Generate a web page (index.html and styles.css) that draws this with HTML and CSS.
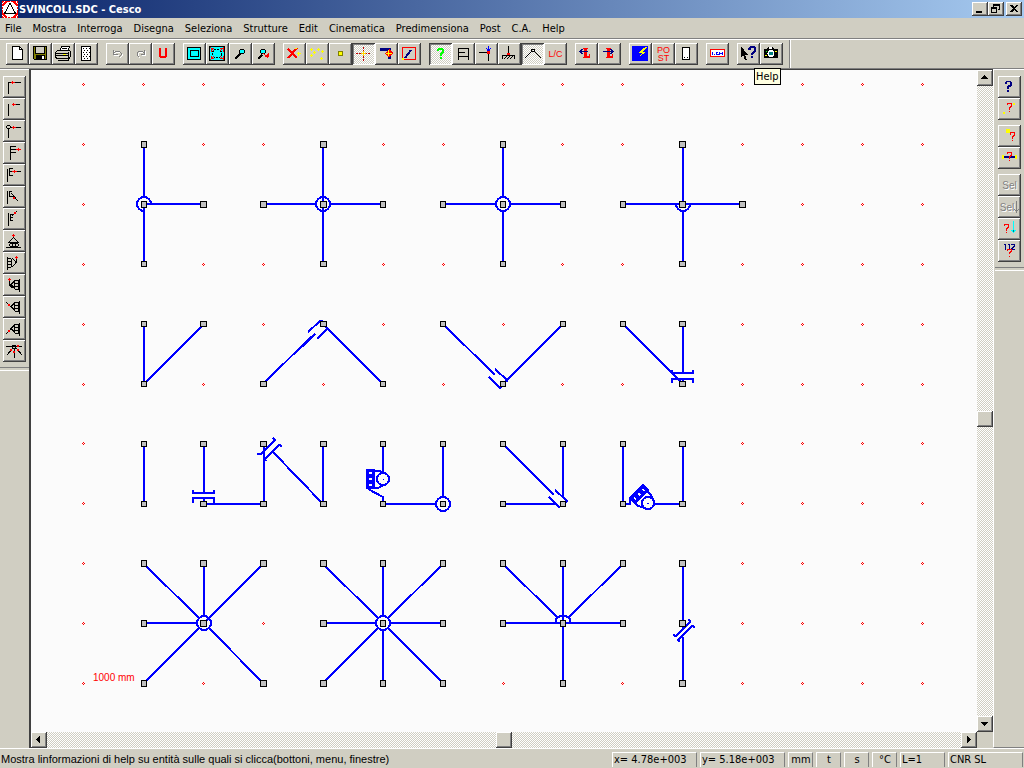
FILE: index.html
```html
<!DOCTYPE html>
<html lang="it">
<head>
    <meta charset="UTF-8">
    <meta name="viewport" content="width=device-width, initial-scale=1.0">
    <title>SVINCOLI.SDC - Cesco</title>
    <link rel="stylesheet" href="styles.css">
</head>
<body>
    <header class="title-bar">
        <svg class="logo" viewBox="0 0 16 17">
            <path d="M0 0h16v17H0z" fill="#fff"/>
            <path d="M0 .5h16M0 16.5h16" stroke="#f00" stroke-dasharray="2 1"/>
            <path d="M.5 0v17M15.5 0v17" stroke="#f00" stroke-dasharray="2 1"/>
            <path d="M0 5l5-5M16 5l-5-5M0 12l5 5M16 12l-5 5" stroke="#f00" stroke-width="2"/>
            <path d="M8 2.500L2.500 12.500h11z" fill="#fff" stroke="#000"/>
        </svg>
        <h1>SVINCOLI.SDC - Cesco</h1>
        <div class="window-controls">
            <button class="win-btn" aria-label="Minimize"><svg viewBox="0 0 16 14"><path d="M4 9h6v2H4z"/></svg></button>
            <button class="win-btn" aria-label="Restore"><svg viewBox="0 0 16 14"><path d="M5 2h7v6h-2V7h1V4H6v1H5zM3 5h6v6H3zm1 2v3h4V7z" fill-rule="evenodd"/></svg></button>
            <button class="win-btn close" aria-label="Close"><svg viewBox="0 0 16 14"><path d="M4 3h2l2 2 2-2h2L9 6.500l3 3.500h-2L8 8l-2 2H4l3-3.500z"/></svg></button>
        </div>
    </header>

    <nav class="menu-bar">
        <a href="#">File</a>
        <a href="#">Mostra</a>
        <a href="#">Interroga</a>
        <a href="#">Disegna</a>
        <a href="#">Seleziona</a>
        <a href="#">Strutture</a>
        <a href="#">Edit</a>
        <a href="#">Cinematica</a>
        <a href="#">Predimensiona</a>
        <a href="#">Post</a>
        <a href="#">C.A.</a>
        <a href="#">Help</a>
    </nav>

    <div class="toolbar">
        <div class="group">
            <button class="tool" aria-label="Nuovo"><svg viewBox="0 0 23 22"><path d="M6.500 3.500h7l3 3v10h-10z" fill="#fff" stroke="#000"/><path d="M13.500 3.500v3h3" fill="none" stroke="#000"/></svg></button>
            <button class="tool" aria-label="Salva"><svg viewBox="0 0 23 22"><path d="M4.500 3.500h13v13h-12l-1-1z" fill="#808000" stroke="#000"/><path d="M7 4h8v6H7z" fill="#d0cec2"/><path d="M6.500 4v6.500h9V4" fill="none" stroke="#000"/><path d="M7 12h9v5H7z"/><path d="M13 13h2v3h-2z" fill="#fff"/></svg></button>
            <button class="tool" aria-label="Stampa"><svg viewBox="0 0 23 22"><path d="M7.500 8.500l2-5h8l-2 5z" fill="#fff" stroke="#000"/><path d="M10 5.500h5M9 7.500h5" stroke="#000"/><path d="M3.500 9.500l2-2h12l1 1v5l-2 2H5l-1.500-1.500z" fill="#d0cec2" stroke="#000"/><path d="M4 10.500h12M4 12.500h12M16.500 9v6M6 17.500h10l2-3" stroke="#000" fill="none"/><path d="M11 11h3v1h-3z" fill="#ff0"/></svg></button>
            <button class="tool" aria-label="Retino"><svg viewBox="0 0 23 22"><path d="M6.500 3.500h9v14h-9z" fill="#fff" stroke="#000"/><path d="M8 5.500h7M8 9.500h7M8 13.500h7" stroke="#000" stroke-dasharray="1 2"/><path d="M9 7.500h6M9 11.500h6M9 15.500h6" stroke="#000" stroke-dasharray="1 2"/></svg></button>
        </div>
        <div class="group">
            <button class="tool" aria-label="Annulla" disabled><svg viewBox="0 0 23 22"><path d="M8.500 8v4h4M9 11l2-2h3l2 2v2l-2 2" fill="none" stroke="#fff"/><path d="M7.500 7v4h4M8 10l2-2h3l2 2v2l-2 2" fill="none" stroke="#808080"/></svg></button>
            <button class="tool" aria-label="Ripeti" disabled><svg viewBox="0 0 23 22"><path d="M16.500 8v4h-4M16 11l-2-2h-3l-2 2v2l2 2" fill="none" stroke="#fff"/><path d="M15.500 7v4h-4M15 10l-2-2h-3l-2 2v2l2 2" fill="none" stroke="#808080"/></svg></button>
            <button class="tool" aria-label="Undo"><svg viewBox="0 0 23 22"><path d="M7 5h2v8h4V5h2v9h-1v1H8v-1H7z" fill="#f00"/></svg></button>
        </div>
        <div class="group">
            <button class="tool" aria-label="Finestra"><svg viewBox="0 0 23 22"><path d="M4.500 4.500h13v12h-13z" fill="#0ff" stroke="#000"/><path d="M7.500 7.500h8v6h-8z" fill="#0ff" stroke="#000"/></svg></button>
            <button class="tool" aria-label="Zoom tutto"><svg viewBox="0 0 23 22"><path d="M3.500 3.500h15v14h-15z" fill="#0ff" stroke="#000"/><circle cx="11" cy="10.500" r="4.500" fill="#0ff" stroke="#000" stroke-dasharray="2 1"/><path d="M4 4l4 4M18 4l-4 4M4 17l4-4M18 17l-4-4M5 8.500V5.500h3M17 8.500V5.500h-3M5 12.500v3h3M17 12.500v3h-3" fill="none" stroke="#f00"/></svg></button>
            <button class="tool" aria-label="Zoom"><svg viewBox="0 0 23 22"><path d="M6 16l5-5" stroke="#000" stroke-width="2"/><circle cx="13" cy="8.500" r="2.500" fill="#0ff" stroke="#000"/></svg></button>
            <button class="tool" aria-label="Zoom meno"><svg viewBox="0 0 23 22"><path d="M6 16l4-4" stroke="#000" stroke-width="2"/><circle cx="11" cy="8.500" r="2.500" fill="#0ff" stroke="#000"/><path d="M11 10l5 5" stroke="#f00"/><path d="M12 14h5V9z" fill="#f00"/></svg></button>
        </div>
        <div class="group">
            <button class="tool" aria-label="Cancella"><svg viewBox="0 0 23 22"><path d="M5 6l9 9M14 5L5 15" stroke="#f00" stroke-width="2"/><path d="M14 10.500h4M15.500 9v4M12 5.500h2" stroke="#ff0"/></svg></button>
            <button class="tool" aria-label="Punti"><svg viewBox="0 0 23 22"><path d="M4 6.500h3M5.500 5v3M11 6.500h3M12.500 5v3M15 8.500h3M16.500 7v3M7 9.500h3M8.500 8v3M4 12.500h3M5.500 11v3M14 15.500h3M15.500 14v3" stroke="#ff0"/></svg></button>
            <button class="tool" aria-label="Nodo"><svg viewBox="0 0 23 22"><path d="M9.500 8.500h4v4h-4z" fill="#ff0" stroke="#808000"/></svg></button>
            <button class="tool pressed" aria-label="Griglia" aria-pressed="true"><svg viewBox="0 0 23 22"><path d="M4 10.500h5M13 10.500h5M11.500 4v4M11.500 13v5" stroke="#c00000" stroke-dasharray="2 1"/><path d="M9 10.500h5M11.500 8v5" stroke="#ffd800"/></svg></button>
            <button class="tool" aria-label="Proprietà"><svg viewBox="0 0 23 22"><path d="M5 5h11v11h-3V8H5z" fill="#000080"/><path d="M14 6l4 4-4 5-4-5z" fill="#f00"/><path d="M11 10.500h6M13.500 7v6" stroke="#ff0"/></svg></button>
            <button class="tool" aria-label="Asta"><svg viewBox="0 0 23 22"><path d="M4.500 4.500h13v12h-13z" fill="none" stroke="#f00"/><path d="M7 15l6-8" stroke="#000080" stroke-width="2"/><path d="M4 15h2v2H4z" fill="#ff0"/></svg></button>
        </div>
        <div class="group">
            <button class="tool pressed" aria-label="Info" aria-pressed="true"><svg viewBox="0 0 23 22"><path d="M8 8V6h1V5h5v1h1v4h-1v1h-1v2h-2v-3h1V9h1V7h-3v1zM11 14h2v2h-2z" fill="#0f0"/></svg></button>
            <button class="tool" aria-label="Telaio"><svg viewBox="0 0 23 22"><path d="M6.500 17V5.500h10V17M6.500 9.500h6M6.500 13.500h10" fill="none" stroke="#000"/></svg></button>
            <button class="tool" aria-label="Carichi"><svg viewBox="0 0 23 22"><path d="M4 9.500h10M13.500 9v9" stroke="#000"/><path d="M13.500 3v5M11 5l2.500 3L16 5" fill="none" stroke="#00f"/><path d="M12 8h3v3h-3z" fill="#f00"/></svg></button>
            <button class="tool" aria-label="Vincoli"><svg viewBox="0 0 23 22"><path d="M10.500 3v8M4 12.500h13M4.500 13v3M16.500 13v3M6 16l3-3M9 16l3-3M12 16l3-3" stroke="#000"/><path d="M9 10h3v2H9z" fill="#f00"/></svg></button>
            <button class="tool pressed" aria-label="Svincoli" aria-pressed="true"><svg viewBox="0 0 23 22"><path d="M4 15l7-7M13 8l7 7" stroke="#000"/><circle cx="12" cy="7.500" r="1.500" fill="none" stroke="#000"/></svg></button>
            <button class="tool tool-text" aria-label="Luci / carichi">L/C</button>
        </div>
        <div class="group">
            <button class="tool" aria-label="Luce precedente"><svg viewBox="0 0 23 22"><path d="M8 5h5v1h-1v7h2v-2h1v4H8v-1h1V6H8z" fill="#f00"/><path d="M5 8.500h8M7.500 6L5 8.500 7.500 11" fill="none" stroke="#000080"/></svg></button>
            <button class="tool" aria-label="Luce successiva"><svg viewBox="0 0 23 22"><path d="M8 5h5v1h-1v7h2v-2h1v4H8v-1h1V6H8z" fill="#f00"/><path d="M5 8.500h10M12.500 6L15 8.500 12.500 11" fill="none" stroke="#000080"/></svg></button>
        </div>
        <div class="group">
            <button class="tool" aria-label="Calcola"><svg viewBox="0 0 23 22"><path d="M3 3h16v15H3z" fill="#00f"/><path d="M18 4l-4 1-4 5h3l-5 5 9-6h-3z" fill="#ff0"/></svg></button>
            <button class="tool tool-text two-lines" aria-label="Post">PO<br>ST</button>
            <button class="tool" aria-label="Pagina"><svg viewBox="0 0 23 22"><path d="M7.500 4.500h7v12h-7z" fill="#fff" stroke="#000"/><path d="M9 14h1v1H9zM12 14h1v1h-1z"/></svg></button>
        </div>
        <div class="group">
            <button class="tool" aria-label="Numeri"><svg viewBox="0 0 23 22"><path d="M4.500 6.500h14v7h-14z" fill="#fff" stroke="#f00"/><path d="M6.500 9v3M10.500 9v3M13.500 9v3M16.500 9v3" stroke="#00f"/><path d="M8 11.500h1M11 9.500h1M11 11.500h2M14 10.500h2" stroke="#00f"/></svg></button>
        </div>
        <div class="group has-tooltip">
            <button class="tool" aria-label="Guida rapida"><svg viewBox="0 0 23 22"><path d="M4 3v11l2-2 2 5h2l-2-5h3z"/><path d="M11 7V5l2-2h4l2 2v3l-3 3v1h-2v-2l3-3V5h-3v2zM14 13h2v2h-2z" fill="#000080"/></svg></button>
            <button class="tool" aria-label="Help"><svg viewBox="0 0 23 22"><path d="M4 6h3l1-2h5l1 2h4v9H4z"/><path d="M9 4h3v2H9z" fill="#fff"/><path d="M6 8h1v1H6z" fill="#0f0"/><path d="M15 8h2v1h-2zM5 12h2v1H5z" fill="#ff0"/><circle cx="11" cy="10.500" r="3.500" fill="#fff"/><circle cx="11" cy="10.500" r="2" fill="#008080"/></svg></button>
            <span class="tooltip" role="tooltip">Help</span>
        </div>
    </div>

    <main class="workspace">
        <aside class="side-bar left">
            <div class="stack">
                <button class="tool" aria-label="Svincolo 1"><svg viewBox="0 0 23 22"><path class="k" d="M5.500 18V6.500H18"/><path class="r" d="M8 6.500h4M9.500 5v3"/></svg></button>
                <button class="tool" aria-label="Svincolo 2"><svg viewBox="0 0 23 22"><path class="k" d="M5.500 6v12M10 6.500h7"/><path class="r" d="M9 6.500h4M10.500 5v3"/></svg></button>
                <button class="tool" aria-label="Svincolo 3"><svg viewBox="0 0 23 22"><path class="k" d="M4 5.500h3M4 8.500h3M3.500 6v2M7.500 6v2M5.500 9v9M8 7.500h10"/><path class="r" d="M9 7.500h4M10.500 6v3"/></svg></button>
                <button class="tool" aria-label="Svincolo 4"><svg viewBox="0 0 23 22"><path class="k" d="M7.500 4v14M7 4.500h6M7 7.500h11M7 10.500h6"/><path class="r" d="M13 7.500h5M15.500 6v3"/></svg></button>
                <button class="tool" aria-label="Svincolo 5"><svg viewBox="0 0 23 22"><path class="k" d="M4.500 5v13M6.500 4v8M6 4.500h4M6 7.500h12M6 11.500h4"/><path class="r" d="M9 7.500h5M11.500 6v3"/></svg></button>
                <button class="tool" aria-label="Svincolo 6"><svg viewBox="0 0 23 22"><path class="k" d="M4.500 5v13M6.500 5v6M6 5.500h3M6 10.500h4M8 7l7 8"/><path class="rd" d="M10 11h2v2h-2z"/></svg></button>
                <button class="tool" aria-label="Svincolo 7"><svg viewBox="0 0 23 22"><path class="k" d="M5.500 5v13M7.500 6v7M7 6.500h3M7 9.500h3M7 12.500h3M9 8l5-5"/><path class="rd" d="M11 4h2v2h-2z"/></svg></button>
                <button class="tool" aria-label="Svincolo 8"><svg viewBox="0 0 23 22"><path class="k" d="M10.500 4v4M10 8l-4 4h9l-4-4M3 17.500h15M7 13.500h8M7 16.500h8M6.500 14v2M9.500 14v2M12.500 14v2M15.500 14v2"/><path class="r" d="M9 5.500h3M10.500 4v3"/></svg></button>
                <button class="tool" aria-label="Svincolo 9"><svg viewBox="0 0 23 22"><path class="k" d="M4.500 5v13M5 6.500h3M5 9.500h3M5 12.500h3M5 15.500h3M8.500 7v8M9 6l3 3v3l-3 3M13.500 5v5l-2 3"/><path class="r" d="M12 5.500h3M13.500 4v3"/></svg></button>
                <button class="tool" aria-label="Svincolo 10"><svg viewBox="0 0 23 22"><path class="k" d="M6.500 4v7l3 3M16.500 5v13M12 6.500h4M12 9.500h4M12 12.500h4M12 15.500h4M11.500 7v8M15.500 7v8M12 6.500l-4 4 4 4"/><path class="r" d="M5 5.500h3M6.500 4v3"/></svg></button>
                <button class="tool" aria-label="Svincolo 11"><svg viewBox="0 0 23 22"><path class="k" d="M3 6l5 5M16.500 5v13M12 6.500h4M12 9.500h4M12 12.500h4M12 15.500h4M11.500 7v8M15.500 7v8M12 6.500l-4 4 4 4"/><path class="rd" d="M5 8h2v2H5z"/></svg></button>
                <button class="tool" aria-label="Svincolo 12"><svg viewBox="0 0 23 22"><path class="k" d="M3 16l5-5M16.500 5v13M12 6.500h4M12 9.500h4M12 12.500h4M12 15.500h4M11.500 7v8M15.500 7v8M12 6.500l-4 4 4 4"/><path class="rd" d="M5 12h2v2H5z"/></svg></button>
                <button class="tool" aria-label="Svincolo 13"><svg viewBox="0 0 23 22"><path class="k" d="M3 6.500h16M11.500 8v10M10 8l-6 7M13 8l6 7M9.500 5.500h3v3h-3z"/><path class="rd" d="M7 9h2v2H7zM10 11h2v2h-2zM14 9h2v2h-2zM14 5h2v2h-2z"/></svg></button>
            </div>
        </aside>

        <section class="view">
            <svg class="drawing" role="img" aria-label="Modello strutturale">
                <defs>
                    <path id="dot" d="M0-1h1v1H0zM-1 0h1v1h-1zM1 0h1v1H1zM0 1h1v1H0z"/>
                    <!-- roller release, circle centre at the origin -->
                    <g id="roller">
                        <path d="M-17-10h9v20h-9z" fill="#00f" stroke="none"/>
                        <path d="M-14-7h3v2h-3zM-14-1h3v2h-3zM-14 5h3v2h-3z" fill="#fbfbfb" stroke="none"/>
                        <path d="M-9-8l5 0 6 2M-9 9h4l6-3"/>
                        <circle r="6" fill="#fbfbfb"/>
                        <path d="M0 0h1v1H0z" fill="#00f" stroke="none"/>
                    </g>
                </defs>
                <!-- model coordinates are window pixels -->
                <g transform="translate(-31 -70)">
                    <g id="grid" class="grid"></g>
                    <g class="beams">
                        <!-- first row -->
                        <path d="M144 144v53M144 204v60M144 204h59"/>
                        <path d="M144 211a7 7 0 1 1 7-7"/>
                        <path d="M323 144v120M263 204h53M330 204h53"/>
                        <circle cx="323" cy="204" r="7"/>
                        <path d="M503 144v53M503 211v53M443 204h53M510 204h53"/>
                        <circle cx="503" cy="204" r="7"/>
                        <path d="M683 144v60M683 211v53M623 204h120M676 204a7 7 0 0 0 14 0"/>
                        <!-- second row -->
                        <path d="M144 324v60l60-60"/>
                        <path d="M263 384l48-47M302 347l13-13M308 332l12-11h3M317 339l11-11M323 324l60 60"/>
                        <path d="M443 324l52 51M489 369l5 5M495 369l13 12M489 377l11 11 3-3M563 324l-60 60"/>
                        <path d="M623 324l60 60M683 324v49M672 370v3h21v-3M672 383v-4h21v4M683 379v5"/>
                        <!-- third row -->
                        <path d="M144 444v60"/>
                        <path d="M204 444v49M193 490v3h21v-3M193 503v-5h21v6M204 498v6h60v-60"/>
                        <path d="M257 454h4l14-14-2-2M266 461l-1-2 14-14 3 1M273 452l50 52v-60"/>
                        <path d="M383 444v29M368 489l15 8v7h53M443 444v53"/>
                        <circle cx="443" cy="504" r="7"/>
                        <use href="#roller" x="383" y="479"/>
                        <path d="M503 444l51 51M555 490l12 11-1 2M549 497l11 11M563 444v52M503 504h53"/>
                        <path d="M623 444v60h7v-5l6-6M654 504h29v-60"/>
                        <use href="#roller" transform="translate(648 503) rotate(45)"/>
                        <!-- fourth row -->
                        <path d="M144 564l55 54M204 564v52M263 564l-59 59M144 623h53M144 683l55-55M263 683l-54-55"/>
                        <circle cx="204" cy="623" r="7"/>
                        <path d="M323 564l55 54M383 564v52M443 564l-55 54M323 623h53M390 623h53M323 683l55-55M383 630v53M443 683l-55-55"/>
                        <circle cx="383" cy="623" r="7"/>
                        <path d="M503 564l55 54M563 564v119M623 564l-55 54M503 623h120M556 623v-4l4-3h6l4 3v4"/>
                        <path d="M683 564v66M683 637v46M673 635l3 1 14-14-1-3M680 642l-2-2 14-14 3 1"/>
                    </g>
                    <g id="nodes" class="nodes"></g>
                    <text class="scale" x="93" y="681">1000 mm</text>
                </g>
            </svg>
            <div class="scrollbar vertical">
                <button class="scroll-btn" aria-label="Su"><svg viewBox="0 0 16 16"><path d="M4 9h7v-1h-1V7H9V6H8V5H7v1H6v1H5v1H4z"/></svg></button>
                <div class="track"><div class="thumb"></div></div>
                <button class="scroll-btn" aria-label="Giù"><svg viewBox="0 0 16 16"><path d="M4 6h7v1h-1v1H9v1H8v1H7V9H6V8H5V7H4z"/></svg></button>
            </div>
            <div class="scrollbar horizontal">
                <button class="scroll-btn" aria-label="Sinistra"><svg viewBox="0 0 16 16"><path d="M9 4v7H8v-1H7V9H6V8H5V7h1V6h1V5h1V4z"/></svg></button>
                <div class="track"><div class="thumb"></div></div>
                <button class="scroll-btn" aria-label="Destra"><svg viewBox="0 0 16 16"><path d="M6 4v7h1v-1h1V9h1V8h1V7H9V6H8V5H7V4z"/></svg></button>
            </div>
        </section>

        <aside class="side-bar right">
            <div class="stack">
                <button class="tool" aria-label="Interroga"><svg viewBox="0 0 23 22"><path d="M7 8V6h1V5h5v1h1v4h-1v1h-2v2H9v-3h1V9h2V6H9v2zM9 14h2v2H9z" fill="#000080"/></svg></button>
                <button class="tool" aria-label="Interroga asta"><svg viewBox="0 0 23 22"><path class="q" d="M9.500 7V5.500h4V8l-2 2v2M11 13.500h1"/><path class="y" d="M15 5h2v2h-2zM5 14h2v2H5z"/></svg></button>
            </div>
            <div class="stack">
                <button class="tool" aria-label="Interroga nodo"><svg viewBox="0 0 23 22"><path class="y" d="M8 4h4v4H8z"/><path class="q" d="M12.500 10V7.500h4V10l-2 2v2M14 15.500h1"/></svg></button>
                <button class="tool" aria-label="Interroga sezione"><svg viewBox="0 0 23 22"><path d="M6 9h11v2H6z" fill="#000080"/><path class="y" d="M4 8h2v4H4zM17 8h2v4h-2z"/><path class="q" d="M9.500 7V5.500h4V8l-2 2v2M11 13.500h1"/></svg></button>
            </div>
            <div class="stack">
                <button class="tool tool-text disabled-text" disabled>Sel</button>
                <button class="tool tool-text disabled-text" aria-label="Sel giù" disabled>Sel<svg class="arrow" viewBox="0 0 5 12"><path d="M2.500 0v11M.5 8l2 3 2-3" fill="none" stroke="#808080"/></svg></button>
                <button class="tool" aria-label="Interroga carico"><svg viewBox="0 0 23 22"><path class="q" d="M6.500 8V6.500h4V9l-2 2v2M8 14.500h1"/><path d="M15 3h1v9h-1zM13 12h5v1h-1v1h-1v1h-1v-1h-1v-1h-1z" fill="#0ff"/><path d="M15 12h1v2h-1z" fill="#008080"/></svg></button>
                <button class="tool" aria-label="Interroga numero"><svg viewBox="0 0 23 22"><path d="M6 4.500h2M7.500 4v6M10 4.500h2M11.500 4v6M13 4.500h3v2l-3 3h4" fill="none" stroke="#000080"/><path class="q" d="M9.500 11V9.500h4V11l-2 2v1M11 16.500h1"/></svg></button>
            </div>
        </aside>
    </main>

    <footer class="status-bar">
        <p class="message">Mostra linformazioni di help su entità sulle quali si clicca(bottoni, menu, finestre)</p>
        <span class="panel wide">x= 4.78e+003</span>
        <span class="panel wide">y= 5.18e+003</span>
        <span class="panel unit">mm</span>
        <span class="panel unit">t</span>
        <span class="panel unit">s</span>
        <span class="panel unit">°C</span>
        <span class="panel load">L=1</span>
        <span class="panel norm">CNR SL</span>
    </footer>

    <script>
        const svgNS = 'http://www.w3.org/2000/svg';

        function add(parent, tag, attrs) {
            const el = document.createElementNS(svgNS, tag);
            for (const key in attrs) el.setAttribute(key, attrs[key]);
            parent.appendChild(el);
        }

        // snap grid
        const gridX = [83, 143, 203, 263, 323, 383, 443, 503, 562, 622, 682, 742, 802, 862, 922];
        const gridY = [84, 144, 204, 264, 324, 384, 443, 503, 563, 623, 683];
        const grid = document.getElementById('grid');
        const nodes = document.getElementById('nodes');

        // one line per grid row, one char per grid column: # = node
        const rows = [
            '...............',
            '.#..#..#..#....',
            '.###########...',
            '.#..#..#..#....',
            '.##.#.#.###....',
            '.#.#.#.#..#....',
            '.##########....',
            '.##########....',
            '.##########....',
            '.##.#######....',
            '.#.####.#.#....'
        ];

        // node boxes: [start, size] for each column and row
        const boxX = [[80, 7], [141, 6], [200, 7], [260, 7], [320, 7], [380, 6], [440, 6], [500, 6], [560, 6], [620, 6], [679, 7], [739, 7]];
        const boxY = [[81, 7], [141, 7], [201, 7], [261, 6], [321, 6], [381, 6], [441, 6], [501, 6], [560, 7], [620, 7], [680, 7]];

        rows.forEach((row, j) => {
            gridX.forEach((x, i) => {
                if (row[i] === '#') {
                    add(nodes, 'rect', {
                        x: boxX[i][0] + 0.5,
                        y: boxY[j][0] + 0.5,
                        width: boxX[i][1] - 1,
                        height: boxY[j][1] - 1
                    });
                } else {
                    add(grid, 'use', { href: '#dot', x: x, y: gridY[j] });
                }
            });
        });
    </script>
</body>
</html>
```
FILE: styles.css
```css
* {
    margin: 0;
    padding: 0;
    box-sizing: border-box;
}

body {
    display: flex;
    flex-direction: column;
    height: 100vh;
    overflow: hidden;
    background: #d0cec2;
    color: #000;
    font-family: Tahoma, "DejaVu Sans Condensed", "Liberation Sans", sans-serif;
    font-size: 11px;
}

button {
    font: inherit;
    border: none;
    background: #d0cec2;
}

svg {
    display: block;
    shape-rendering: crispEdges;
}

/* title */
.title-bar {
    display: flex;
    align-items: center;
    height: 18px;
    padding: 0 2px;
    background: linear-gradient(90deg, #0a246a, #a6caf0);
}

.logo {
    width: 16px;
    height: 17px;
}

.title-bar h1 {
    flex: 1;
    margin-left: 1px;
    color: #fff;
    font-size: 11px;
    font-weight: bold;
}

.window-controls {
    display: flex;
}

.win-btn {
    width: 16px;
    height: 14px;
    box-shadow: inset -1px -1px #404040, inset 1px 1px #fff, inset -2px -2px #808080;
}

.win-btn.close {
    margin-left: 2px;
}

/* menu */
.menu-bar {
    display: flex;
    align-items: center;
    gap: 1px;
    height: 21px;
    border-bottom: 1px solid #808080;
}

.menu-bar a {
    padding: 0 5px;
    color: #000;
    text-decoration: none;
}

/* toolbar */
.toolbar {
    display: flex;
    gap: 8px;
    height: 30px;
    padding: 3px 6px 0;
    border-top: 1px solid #fff;
    border-bottom: 1px solid #808080;
}

.group {
    display: flex;
}

.tool {
    width: 23px;
    height: 22px;
    flex: none;
    box-shadow: inset -1px -1px #404040, inset 1px 1px #fff, inset -2px -2px #808080;
}

.tool.pressed {
    background: repeating-conic-gradient(#fff 0 25%, #d0cec2 0 50%) 0 0 / 2px 2px;
    box-shadow: inset 1px 1px #404040, inset -1px -1px #fff, inset 2px 2px #808080;
}

.tool-text {
    color: #f00;
    font-family: "Liberation Sans", sans-serif;
    font-size: 9px;
    text-align: center;
}

.two-lines {
    line-height: 8px;
}

.disabled-text {
    display: flex;
    align-items: center;
    justify-content: center;
    color: #808080;
    font-size: 10px;
    text-shadow: 1px 1px #fff;
}

.arrow {
    width: 5px;
    height: 12px;
}

.has-tooltip {
    position: relative;
    padding-right: 6px;
    border-right: 1px solid #808080;
    box-shadow: 1px 0 #fff;
    margin-top: -3px;
    padding-top: 3px;
}

.tooltip {
    position: absolute;
    top: 28px;
    left: 17px;
    z-index: 2;
    padding: 0 1px;
    border: 1px solid #000;
    background: #ffffe1;
    line-height: 15px;
}

/* workspace */
.workspace {
    display: flex;
    flex: 1;
    min-height: 0;
}

.side-bar {
    display: flex;
    flex-direction: column;
    gap: 5px;
    border-top: 1px solid #fff;
}

.side-bar.left {
    width: 29px;
    padding: 6px 3px 0;
}

.side-bar.right {
    width: 31px;
    padding: 6px 3px 0 4px;
    border-left: 1px solid #fff;
    border-bottom: 1px solid #808080;
}

.stack {
    display: flex;
    flex-direction: column;
}

.side-bar::after {
    content: "";
    height: 2px;
    margin: 0 -3px;
    border-top: 1px solid #808080;
    border-bottom: 1px solid #fff;
}

.k {
    fill: none;
    stroke: #000;
}

.r,
.q {
    fill: none;
    stroke: #f00;
}

.rd {
    fill: #f00;
}

.y {
    fill: #ff0;
}

.view {
    display: grid;
    flex: 1;
    grid-template-columns: 1fr 16px;
    grid-template-rows: 1fr 16px;
    min-width: 0;
    border-top: 1px solid #404040;
    border-left: 2px solid #404040;
}

.drawing {
    width: 100%;
    height: 100%;
    min-height: 0;
    background: #fbfbfb;
}

.grid {
    fill: #f00;
}

.beams {
    fill: none;
    stroke: #00f;
    stroke-width: 2;
}

.nodes {
    fill: #c0c0c0;
    stroke: #000;
}

.scale {
    fill: #f00;
    font-family: "Liberation Sans", sans-serif;
    font-size: 10px;
}

/* scrollbars */
.scrollbar {
    display: flex;
    background: repeating-conic-gradient(#fff 0 25%, #d0cec2 0 50%) 0 0 / 2px 2px;
}

.track {
    display: flex;
    flex: 1;
}

.track::before,
.track::after {
    content: "";
    flex: 1;
}

.vertical,
.vertical .track {
    flex-direction: column;
}

.vertical .track::before {
    flex: 9;
}

.vertical .track::after {
    flex: 8;
}

.scroll-btn,
.thumb {
    flex: none;
    width: 16px;
    height: 16px;
    background: #d0cec2;
    box-shadow: inset -1px -1px #404040, inset 1px 1px #fff, inset -2px -2px #808080;
}

/* status bar */
.status-bar {
    display: flex;
    gap: 3px;
    height: 20px;
    padding: 3px 1px 1px;
    border-top: 1px solid #fff;
    line-height: 15px;
    white-space: nowrap;
}

.message {
    flex: 1;
    min-width: 0;
    overflow: hidden;
    font-family: Tahoma, "Liberation Sans", sans-serif;
}

.panel {
    padding-left: 1px;
    border-left: 1px solid #fff;
    border-right: 1px solid #808080;
    border-top: 1px solid #fff;
    line-height: 14px;
}

.wide {
    width: 85px;
}

.unit {
    width: 25px;
    text-align: center;
}

.load {
    width: 45px;
}

.norm {
    width: 75px;
}
```
